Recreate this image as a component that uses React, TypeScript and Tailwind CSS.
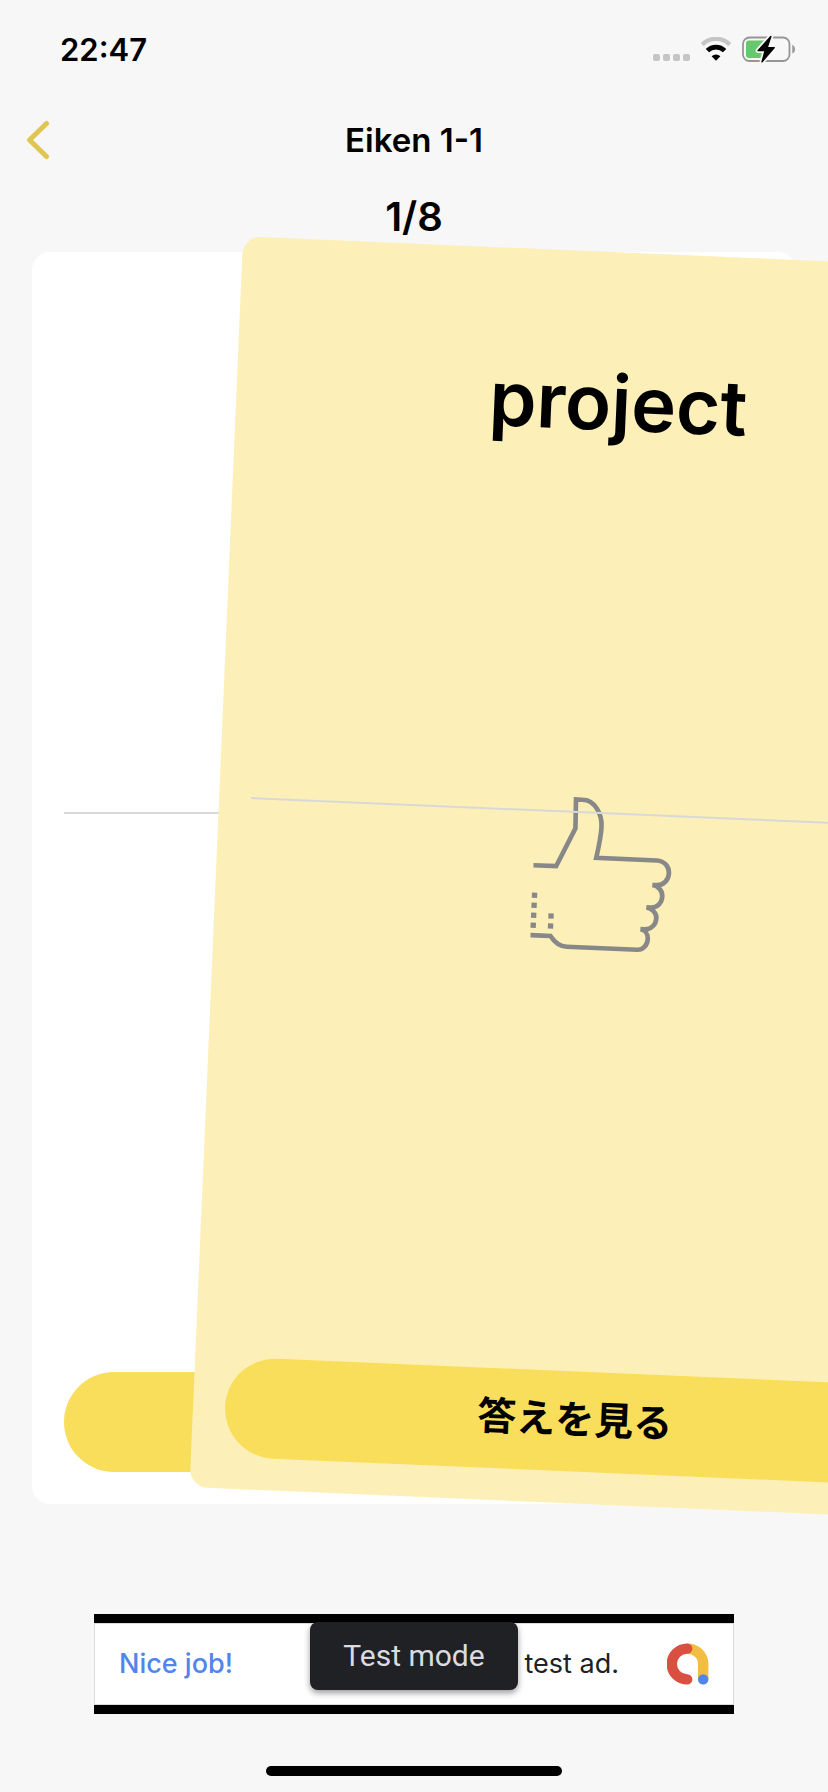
import type { ReactNode } from "react";

const UI_FONT = "font-['Inter','Noto_Sans_CJK_JP',sans-serif]";

function SignalDots() {
  return (
    <svg viewBox="0 0 37 24" className="h-6 w-[37px] fill-[#c5c5c5]" aria-hidden="true">
      {[0, 10, 20, 30].map((x) => (
        <rect key={x} x={x} y="17" width="7" height="7" rx="2" />
      ))}
    </svg>
  );
}

function WifiIcon() {
  return (
    <svg viewBox="0 0 32 24" className="h-6 w-8" aria-hidden="true">
      <path d="M2.2 7.6a19.6 19.6 0 0 1 27.6 0" fill="none" stroke="#c5c5c5" strokeWidth="4.4" />
      <path d="M7.400 13.600a12.200 12.200 0 0 1 17.200 0" fill="none" stroke="#000" strokeWidth="4.800" />
      <path d="M11.600 19.200a6.400 6.400 0 0 1 8.800 0L16 23.800Z" fill="#000" />
    </svg>
  );
}

function BatteryIcon() {
  return (
    <svg viewBox="0 0 54 28" className="h-7 w-[54px]" aria-hidden="true">
      <rect x="1" y="2.5" width="46.5" height="23.5" rx="6.5" fill="none" stroke="#969696" strokeWidth="1.8" />
      <path d="M50.3 9.8c1.6.6 2.7 2.3 2.7 4.4s-1.1 3.8-2.7 4.4Z" fill="#969696" />
      <path d="M7 5.5h16v17.500H7a3 3 0 0 1-3-3v-11.500a3 3 0 0 1 3-3Z" fill="#67c76b" />
      <path
        d="M28.300 1 15.500 15.200a.6.6 0 0 0 .4 1h6.300L19.400 26.500c-.3 1 .5 1.400 1.200.7L32.800 13a.6.6 0 0 0-.4-1h-6.300L29.500 1.800c.3-1-.5-1.500-1.200-.8Z"
        fill="#000"
        stroke="#f7f7f7"
        strokeWidth="3.600"
        paintOrder="stroke"
      />
    </svg>
  );
}

function ThumbUp() {
  return (
    <svg viewBox="-240 -240 480 480" className="size-40" fill="none" stroke="#888888" strokeWidth="14" aria-hidden="true">
      <path d="M-195-30h68l53-116-2-87h19C-18-234 4-190 4-154c0 30-6 62-12 94h182c24 0 38 18 38 36 0 22-16 38-36 38h-12c18 2 31 16 31 33 0 21-15 35-34 35h-12c16 2 31 14 31 31 0 20-15 35-34 35h-12c14 2 23 14 23 28 0 20-14 34-30 34H-85c-20 0-36-10-50-30h-60" />
      <path d="M-188 52v106M-136 112v46" strokeWidth="16" strokeDasharray="16 14" />
    </svg>
  );
}

function AdLogo() {
  return (
    <svg viewBox="0 0 42 42" className="size-[42px]" fill="none" strokeWidth="10.400" strokeLinecap="round" aria-hidden="true">
      <path d="M20.500 5.600C29 5.600 36.200 12 36.200 21v15" stroke="#f2bd42" />
      <path d="M20.200 5.600a15.400 15.400 0 0 0 0 30.800" stroke="#d95040" />
      <circle cx="36.200" cy="36.400" r="5.200" fill="#5085ec" />
    </svg>
  );
}

function CardHalves({ children }: { children?: ReactNode }) {
  return (
    <div className="grid flex-1 grid-rows-2">
      <div className="flex justify-center pt-[104px]">{children}</div>
      <div className="mx-8 border-t-2 border-[#d8d8d8]" />
    </div>
  );
}

export default function App() {
  return (
    <div className={`flex min-h-screen flex-col overflow-hidden bg-[#f7f7f7] text-black ${UI_FONT}`}>
      <div className="flex h-[88px] items-center justify-between pt-3 pr-8 pl-[60px]">
        <time className="text-[31px] leading-10 font-semibold">22:47</time>
        <div className="flex items-center gap-[10px] pb-0.5">
          <SignalDots />
          <WifiIcon />
          <BatteryIcon />
        </div>
      </div>

      <header className="grid h-[104px] grid-cols-[1fr_auto_1fr] items-center">
        <button type="button" aria-label="Back" className="flex h-16 w-20 items-center pl-6">
          <svg viewBox="0 0 28 40" className="h-10 w-7" fill="none" stroke="#dfc653" strokeWidth="5" strokeLinecap="round" strokeLinejoin="round" aria-hidden="true">
            <path d="M22.500 3.500 5.500 20l17 16.500" />
          </svg>
        </button>
        <h1 className="text-[33px] leading-10 font-semibold">Eiken 1-1</h1>
      </header>

      <p className="h-[60px] text-center text-[40px] leading-[50px] font-semibold">1/8</p>

      <main className="relative mx-8 flex flex-1 flex-col">
        <div aria-hidden="true" className="flex flex-1 flex-col rounded-[18px] bg-white pb-8">
          <CardHalves />
          <div className="mx-8 h-[100px] rounded-full bg-[#f9de5b]" />
        </div>

        <article className="absolute inset-0 flex translate-x-[184px] rotate-[2.45deg] flex-col rounded-[18px] bg-[#fcf0b8] pb-8">
          <div className="absolute inset-0 flex items-center justify-center">
            <ThumbUp />
          </div>
          <div className="relative flex flex-1 flex-col">
            <CardHalves>
              <h2 className="text-[76px] leading-[92px] font-semibold">project</h2>
            </CardHalves>
            <button type="button" className="mx-8 h-[100px] rounded-full bg-[#f9de5b] pb-1 text-[39px] leading-[60px] font-semibold">
              答えを見る
            </button>
          </div>
        </article>
      </main>

      <aside className="relative mx-auto mt-[110px] flex h-[100px] w-[640px] max-w-full flex-col border-y-9 border-black">
        <div className="flex flex-1 items-center border border-[#dadce0] bg-white pr-6 pl-6 text-[27px] leading-9">
          <span className="font-medium text-[#5085ec]">Nice job!</span>
          <span className="ml-auto text-[#202124]">test ad.</span>
          <span className="ml-12">
            <AdLogo />
          </span>
        </div>
        <div className="absolute inset-x-0 -top-px flex justify-center">
          <div className="rounded-lg bg-[#202124] px-[33px] py-4 font-['Roboto',sans-serif] text-[30px] leading-9 text-[#dadce0] shadow-[0_3px_6px_rgba(0,0,0,0.4)]">
            Test mode
          </div>
        </div>
      </aside>

      <div className="mx-auto mt-[52px] mb-4 h-[10px] w-[296px] rounded-full bg-black" />
    </div>
  );
}
